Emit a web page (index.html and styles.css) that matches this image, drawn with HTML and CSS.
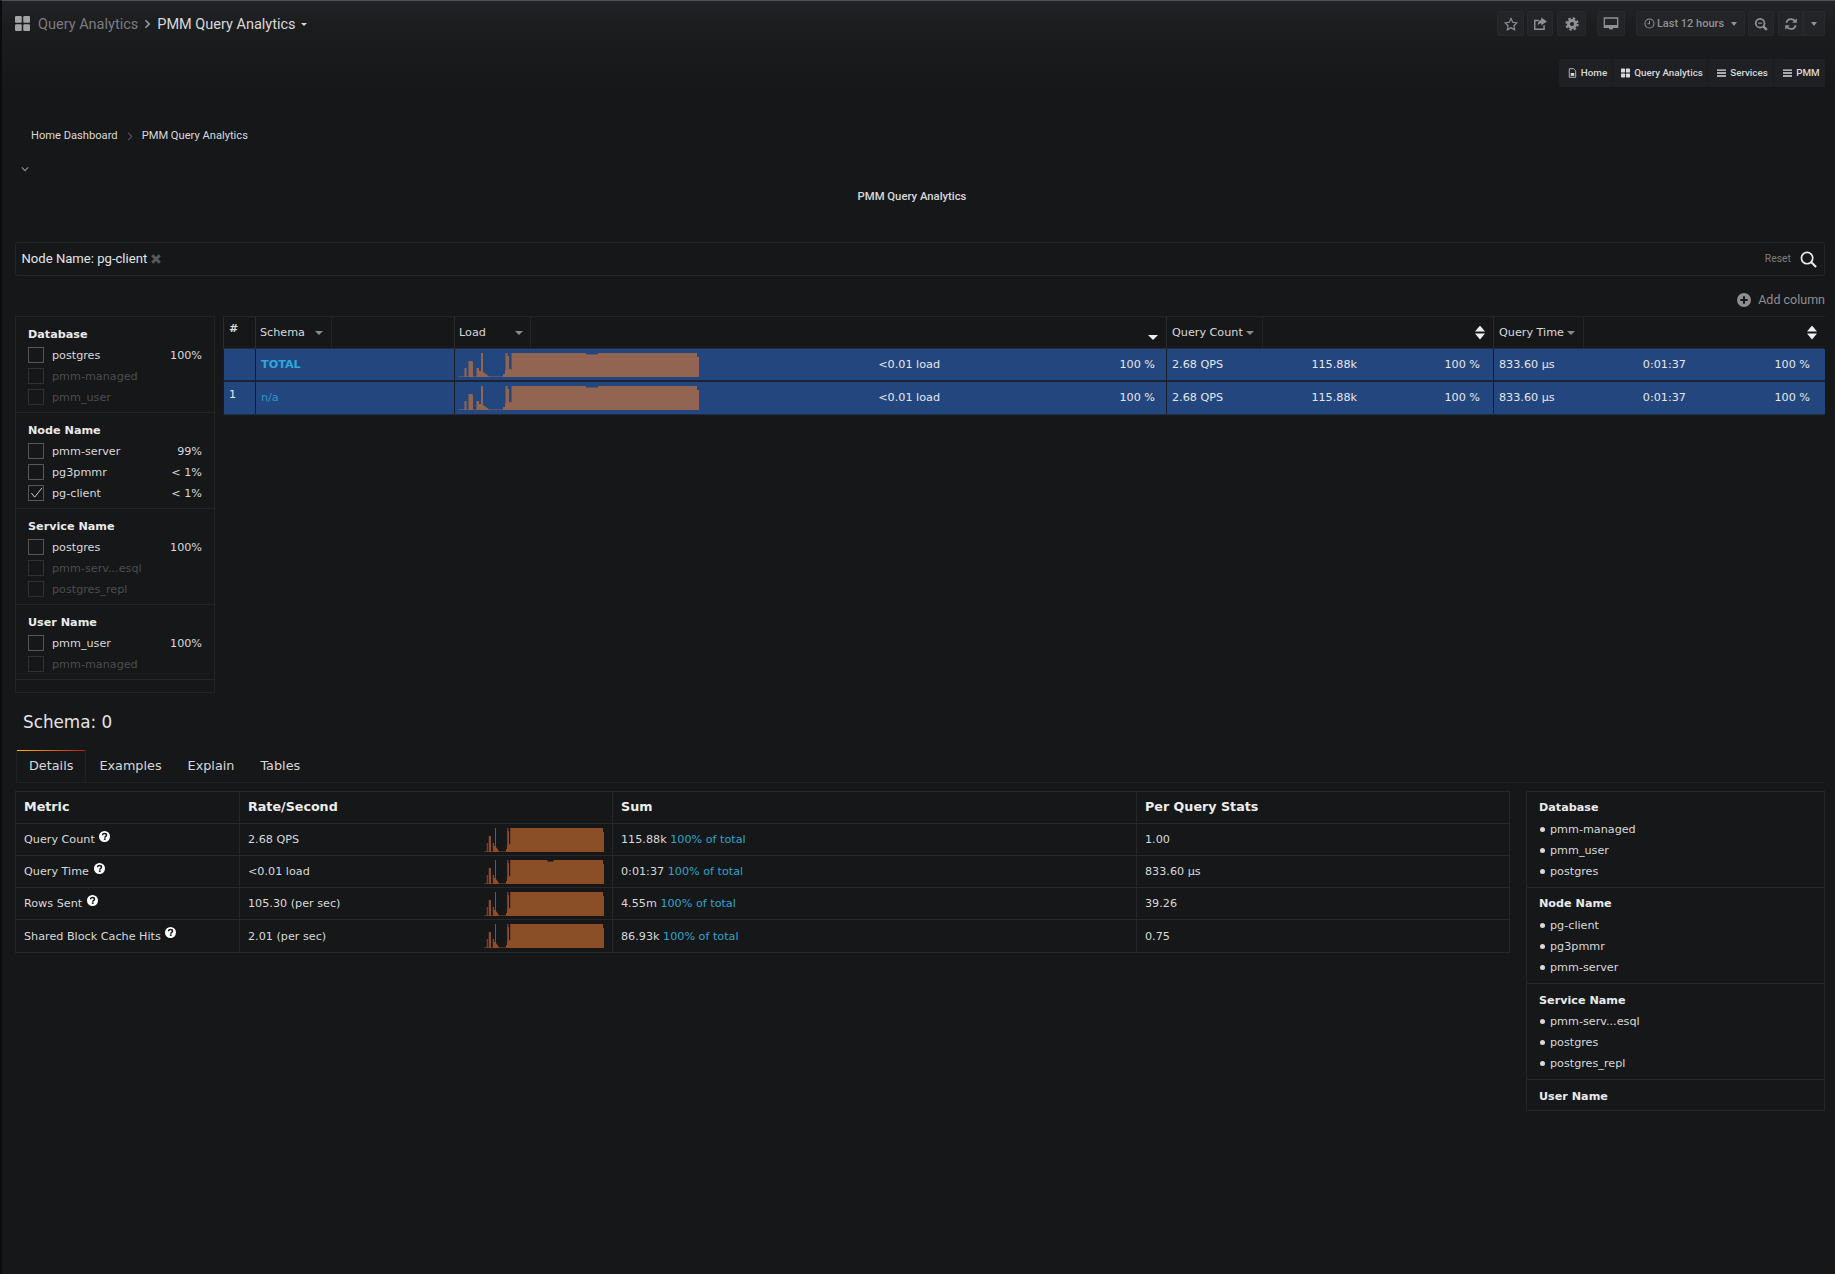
FILE: index.html
```html
<!DOCTYPE html>
<html lang="en">
<head>
<meta charset="utf-8">
<title>PMM Query Analytics</title>
<link rel="stylesheet" href="styles.css">
</head>
<body>
<svg class="defs" width="0" height="0" aria-hidden="true">
  <symbol id="spark" viewBox="0 0 240 24" preserveAspectRatio="none">
    <path d="M0 23.4H5.5V15H7.5V23.4H9.5V8H13.5V9H14V23.4H17.5V15H20V18H22V0H24V19L27 21L29 22.5L30 23.4H44V21H46V17.500H46.500V0H48.500V3H50V16H52V17H52.500V0H238V4H240V24H0Z"/>
  </symbol>
  <symbol id="spark-dent" viewBox="0 0 240 24" preserveAspectRatio="none">
    <path d="M0 23.4H5.5V15H7.5V23.4H9.5V8H13.5V9H14V23.4H17.5V15H20V18H22V0H24V19L27 21L29 22.5L30 23.4H44V21H46V17.500H46.500V0H48.500V3H50V16H52V17H52.500V0H127V1.500H139V0H238V4H240V24H0Z"/>
  </symbol>
  <symbol id="grid" viewBox="0 0 16 16">
    <rect x="0" y="0" width="7.200" height="7.200" rx="1.200"/><rect x="8.800" y="0" width="7.200" height="7.200" rx="1.200"/>
    <rect x="0" y="8.800" width="7.200" height="7.200" rx="1.200"/><rect x="8.800" y="8.800" width="7.200" height="7.200" rx="1.200"/>
  </symbol>
  <symbol id="bars" viewBox="1 1 10 10">
    <path d="M1 2h10v1.500H1zM1 5.300h10v1.500H1zM1 8.600h10v1.500H1z"/>
  </symbol>
  <symbol id="help" viewBox="0 0 12 12">
    <circle cx="6" cy="6" r="6" fill="#fff"/>
    <path d="M3.900 4.700C3.900 3.300 5 2.700 6 2.700C7.200 2.700 8.200 3.400 8.200 4.500C8.200 5.900 6.300 5.900 6.300 7.300" fill="none" stroke="#161719" stroke-width="1.600"/>
    <rect x="5.300" y="8" width="2" height="1.700" fill="#161719"/>
  </symbol>
</svg>

<div class="page">
  <header class="navbar">
    <div class="nav-title">
      <svg class="nav-logo"><use href="#grid"/></svg>
      <span class="nav-folder">Query Analytics</span>
      <svg class="nav-sep" viewBox="0 0 8 12"><path d="M1.500 1.500L6 6L1.500 10.500" fill="none" stroke="currentColor" stroke-width="2"/></svg>
      <span class="nav-dash">PMM Query Analytics</span>
      <span class="nav-caret"></span>
    </div>
    <div class="nav-actions">
      <div class="nav-btn w-star"><svg viewBox="0 0 24 24" class="ico"><path d="M12 2.500L15 9L22 10L17 15L18.200 22L12 18.500L5.800 22L7 15L2 10L9 9Z" fill="none" stroke="currentColor" stroke-width="2"/></svg></div>
      <div class="nav-btn w-share"><svg viewBox="0 0 24 24" class="ico"><path d="M19 14V21H3V6H10" fill="none" stroke="currentColor" stroke-width="2.500"/><path d="M14 1L24 7.500L14 14V10.500C11 10.500 9 12 8 15C8 9 10 5.500 14 5Z" fill="currentColor"/></svg></div>
      <div class="nav-btn w-gear"><svg viewBox="0 0 24 24" class="ico"><circle cx="12" cy="12" r="9.500" fill="none" stroke="currentColor" stroke-width="4" stroke-dasharray="4.200 3.260"/><circle cx="12" cy="12" r="6" fill="none" stroke="currentColor" stroke-width="5"/></svg></div>
      <div class="nav-btn w-tv gap-left"><svg viewBox="0 0 24 24" class="ico ico-lg"><path d="M2 3H22V17H2Z" fill="none" stroke="currentColor" stroke-width="2"/><rect x="2" y="13.500" width="20" height="3.500" fill="currentColor"/><path d="M9 17H15V20H9Z" fill="currentColor"/></svg></div>
      <div class="nav-btn w-time gap-left">
        <svg viewBox="0 0 24 24" class="ico ico-clock"><circle cx="12" cy="12" r="10" fill="none" stroke="currentColor" stroke-width="2.200"/><path d="M12 6V12.500H8" fill="none" stroke="currentColor" stroke-width="2.200"/></svg>
        <span>Last 12 hours</span><span class="caret-sm"></span>
      </div>
      <div class="nav-btn w-zoom"><svg viewBox="0 0 24 24" class="ico"><circle cx="10.500" cy="10.500" r="7.500" fill="none" stroke="currentColor" stroke-width="3"/><path d="M16 16L22 22" stroke="currentColor" stroke-width="4"/><path d="M7 10.500H14" stroke="currentColor" stroke-width="2"/></svg></div>
      <div class="nav-btn w-refresh"><svg viewBox="0 0 24 24" class="ico"><path d="M4 10C5 6 8 3.500 12 3.500C15 3.500 17.500 5 19 7" fill="none" stroke="currentColor" stroke-width="3"/><path d="M22 2V10H14Z" fill="currentColor"/><path d="M20 14C19 18 16 20.500 12 20.500C9 20.500 6.500 19 5 17" fill="none" stroke="currentColor" stroke-width="3"/><path d="M2 22V14H10Z" fill="currentColor"/></svg></div>
      <div class="nav-btn w-drop"><span class="caret-sm"></span></div>
    </div>
  </header>

  <nav class="submenu">
    <a class="sub-link w-home"><svg viewBox="0 0 12 14" class="sub-ico"><path d="M1.500 1H7.500L10.500 4V13H1.500Z" fill="none" stroke="currentColor" stroke-width="1.100"/><path d="M3.500 7H8.500V11H3.500Z" fill="currentColor"/></svg>Home</a>
    <a class="sub-link w-qan"><svg class="sub-ico sub-fill"><use href="#grid"/></svg>Query Analytics</a>
    <a class="sub-link w-svc"><svg class="sub-ico sub-fill"><use href="#bars"/></svg>Services</a>
    <a class="sub-link w-pmm"><svg class="sub-ico sub-fill"><use href="#bars"/></svg>PMM</a>
  </nav>

  <div class="crumbs">
    <span>Home Dashboard</span>
    <svg class="crumb-sep" viewBox="0 0 6 10"><path d="M1 1L5 5L1 9" fill="none" stroke="currentColor" stroke-width="1.200"/></svg>
    <span>PMM Query Analytics</span>
  </div>

  <svg class="collapse" viewBox="0 0 10 6"><path d="M1 1L5 5L9 1" fill="none" stroke="currentColor" stroke-width="1.600"/></svg>

  <div class="panel-title">PMM Query Analytics</div>

  <div class="search">
    <div class="chip">Node Name: pg-client
      <svg viewBox="0 0 10 10" class="chip-x"><path d="M1.200 1.200L8.800 8.800M8.800 1.200L1.200 8.800" stroke="currentColor" stroke-width="3"/></svg>
    </div>
    <span class="reset">Reset</span>
    <svg viewBox="0 0 18 18" class="search-ico"><circle cx="7.500" cy="7.500" r="6" fill="none" stroke="currentColor" stroke-width="1.800"/><path d="M12 12L17 17" stroke="currentColor" stroke-width="2.200"/></svg>
  </div>

  <div class="add-col">
    <svg viewBox="0 0 14 14" class="add-ico"><circle cx="7" cy="7" r="7" fill="currentColor"/><path d="M7 3.300V10.700M3.300 7H10.700" stroke="#161719" stroke-width="2"/></svg>
    <span>Add column</span>
  </div>

  <section class="overview">
    <aside class="filters">
      <div class="f-group">
        <h4 class="f-head">Database</h4>
        <div class="f-row"><span class="box"></span><span class="f-name">postgres</span><span class="f-val">100%</span></div>
        <div class="f-row off"><span class="box"></span><span class="f-name">pmm-managed</span></div>
        <div class="f-row off"><span class="box"></span><span class="f-name">pmm_user</span></div>
      </div>
      <div class="f-group">
        <h4 class="f-head">Node Name</h4>
        <div class="f-row"><span class="box"></span><span class="f-name">pmm-server</span><span class="f-val">99%</span></div>
        <div class="f-row"><span class="box"></span><span class="f-name">pg3pmmr</span><span class="f-val">&lt; 1%</span></div>
        <div class="f-row"><span class="box"><svg viewBox="0 0 14 14" class="tick"><path d="M1.500 7.500L5 12L13 2" fill="none" stroke="currentColor"/></svg></span><span class="f-name">pg-client</span><span class="f-val">&lt; 1%</span></div>
      </div>
      <div class="f-group">
        <h4 class="f-head">Service Name</h4>
        <div class="f-row"><span class="box"></span><span class="f-name">postgres</span><span class="f-val">100%</span></div>
        <div class="f-row off"><span class="box"></span><span class="f-name">pmm-serv...esql</span></div>
        <div class="f-row off"><span class="box"></span><span class="f-name">postgres_repl</span></div>
      </div>
      <div class="f-group">
        <h4 class="f-head">User Name</h4>
        <div class="f-row"><span class="box"></span><span class="f-name">pmm_user</span><span class="f-val">100%</span></div>
        <div class="f-row off"><span class="box"></span><span class="f-name">pmm-managed</span></div>
      </div>
    </aside>

    <div class="qtable">
      <div class="q-row q-head">
        <div class="q-cell h-num">#</div>
        <div class="q-cell h-split"><div class="h-sel h-schema">Schema<span class="caret-h"></span></div></div>
        <div class="q-cell h-split"><div class="h-sel h-load">Load<span class="caret-h"></span></div><div class="h-sort"><span class="tri-down"></span></div></div>
        <div class="q-cell h-split"><div class="h-sel h-count">Query Count<span class="caret-h caret-tight"></span></div><div class="h-sort"><span class="tri-both"></span></div></div>
        <div class="q-cell h-split"><div class="h-sel h-time">Query Time<span class="caret-h caret-tight"></span></div><div class="h-sort h-sort-last"><span class="tri-both"></span></div></div>
      </div>
      <div class="q-row q-data">
        <div class="q-cell"></div>
        <div class="q-cell q-name q-total">TOTAL</div>
        <div class="q-cell m-load"><svg class="spark"><use href="#spark-dent"/></svg><span>&lt;0.01 load</span><span class="pct">100 %</span></div>
        <div class="q-cell m-count"><span>2.68 QPS</span><span class="mid">115.88k</span><span class="pct">100 %</span></div>
        <div class="q-cell m-time"><span>833.60 µs</span><span class="mid">0:01:37</span><span class="pct">100 %</span></div>
      </div>
      <div class="q-row q-data">
        <div class="q-cell q-idx">1</div>
        <div class="q-cell q-name">n/a</div>
        <div class="q-cell m-load"><svg class="spark"><use href="#spark-dent"/></svg><span>&lt;0.01 load</span><span class="pct">100 %</span></div>
        <div class="q-cell m-count"><span>2.68 QPS</span><span class="mid">115.88k</span><span class="pct">100 %</span></div>
        <div class="q-cell m-time"><span>833.60 µs</span><span class="mid">0:01:37</span><span class="pct">100 %</span></div>
      </div>
    </div>
  </section>

  <h2 class="schema">Schema: 0</h2>

  <div class="tabs">
    <div class="tab active">Details</div>
    <div class="tab">Examples</div>
    <div class="tab">Explain</div>
    <div class="tab">Tables</div>
  </div>

  <section class="details">
    <div class="metrics">
      <div class="d-row d-head">
        <div class="d-cell">Metric</div><div class="d-cell">Rate/Second</div><div class="d-cell">Sum</div><div class="d-cell">Per Query Stats</div>
      </div>
      <div class="d-row">
        <div class="d-cell">Query Count <svg class="help"><use href="#help"/></svg></div>
        <div class="d-cell d-rate"><span>2.68 QPS</span><svg class="spark-d"><use href="#spark"/></svg></div>
        <div class="d-cell">115.88k <span class="share">100% of total</span></div>
        <div class="d-cell">1.00</div>
      </div>
      <div class="d-row">
        <div class="d-cell">Query Time <svg class="help"><use href="#help"/></svg></div>
        <div class="d-cell d-rate"><span>&lt;0.01 load</span><svg class="spark-d"><use href="#spark-dent"/></svg></div>
        <div class="d-cell">0:01:37 <span class="share">100% of total</span></div>
        <div class="d-cell">833.60 µs</div>
      </div>
      <div class="d-row">
        <div class="d-cell">Rows Sent <svg class="help"><use href="#help"/></svg></div>
        <div class="d-cell d-rate"><span>105.30 (per sec)</span><svg class="spark-d"><use href="#spark"/></svg></div>
        <div class="d-cell">4.55m <span class="share">100% of total</span></div>
        <div class="d-cell">39.26</div>
      </div>
      <div class="d-row">
        <div class="d-cell">Shared Block Cache Hits <svg class="help"><use href="#help"/></svg></div>
        <div class="d-cell d-rate"><span>2.01 (per sec)</span><svg class="spark-d"><use href="#spark"/></svg></div>
        <div class="d-cell">86.93k <span class="share">100% of total</span></div>
        <div class="d-cell">0.75</div>
      </div>
    </div>

    <aside class="labels">
      <div class="l-group">
        <h4 class="l-head">Database</h4>
        <ul class="l-list"><li>pmm-managed</li><li>pmm_user</li><li>postgres</li></ul>
      </div>
      <div class="l-group">
        <h4 class="l-head">Node Name</h4>
        <ul class="l-list"><li>pg-client</li><li>pg3pmmr</li><li>pmm-server</li></ul>
      </div>
      <div class="l-group l-wide">
        <h4 class="l-head">Service Name</h4>
        <ul class="l-list"><li>pmm-serv...esql</li><li>postgres</li><li>postgres_repl</li></ul>
      </div>
      <div class="l-group l-last">
        <h4 class="l-head">User Name</h4>
      </div>
    </aside>
  </section>
</div>
</body>
</html>
```

FILE: styles.css
```css
* { box-sizing: border-box; }
html, body { margin: 0; height: 100%; }
body {
  background: linear-gradient(to bottom, #232427 0, #1c1d1f 24px, #161719 90px);
  background-repeat: no-repeat;
  background-color: #161719;
  border-top: 1px solid #4f4f51;
  border-left: 2px solid #0b0c0d;
  color: #d8d9da;
  font: 11.200px/14px "DejaVu Sans", sans-serif;
  overflow: hidden;
}
.defs { position: absolute; }
.page { padding: 0 10px 0 13px; }

/* navbar */
.navbar { display: flex; justify-content: space-between; height: 58px; padding-top: 10px; }
.nav-title { display: flex; align-items: center; height: 25px; font: 14.500px/25px Roboto, sans-serif; }
.nav-logo { width: 15px; height: 15px; fill: #a3a4a6; margin-right: 8px; }
.nav-folder { color: #7b7b7e; padding-top: 1px; }
.nav-sep { width: 7px; height: 10px; color: #9a9a9c; margin: 1px 6px 0; }
.nav-dash { color: #d8d9da; padding-top: 1px; }
.nav-caret { border: 3px solid transparent; border-top: 3px solid #d8d9da; margin: 5px 0 0 5px; }
.nav-actions { display: flex; gap: 3px; }
.nav-btn { height: 25px; display: flex; align-items: center; justify-content: center; background: #232427; border: 1px solid #29292c; color: #8f9092; border-radius: 2px; font: 500 11px/23px Roboto, sans-serif; }
.ico { width: 14px; height: 14px; }
.ico-lg { width: 16px; height: 16px; }
.ico-clock { width: 11px; height: 11px; margin-right: 2px; }
.gap-left { margin-left: 8px; }
.w-star { width: 27px; } .w-share { width: 26px; } .w-gear { width: 29px; margin-left: 1px; }
.w-tv { width: 28px; } .w-time { width: 109px; } .w-zoom { width: 26px; }
.w-refresh { width: 25px; margin-left: 1px; border-radius: 2px 0 0 2px; }
.w-drop { width: 22px; margin-left: -3px; border-radius: 0 2px 2px 0; }
.caret-sm { border: 3.500px solid transparent; border-top: 4px solid #8f9092; margin: 4px 0 0 7px; }
.w-drop .caret-sm { margin-left: 0; }

/* submenu */
.submenu { display: flex; justify-content: flex-end; height: 28px; }
.sub-link { display: flex; align-items: center; justify-content: center; padding-left: 4px; background: #1f2023; color: #d8d9da; font: 500 9.800px/28px Roboto, sans-serif; border-right: 1px solid #1a1b1d; }
.sub-ico { width: 9px; height: 10px; margin-right: 4px; }
.sub-fill { fill: #d8d9da; }
.w-home { width: 54px; border-radius: 2px 0 0 2px; }
.w-qan { width: 95px; } .w-svc { width: 66px; } .w-pmm { width: 51px; border-right: 0; }

/* breadcrumbs, title */
.crumbs { display: flex; align-items: center; height: 16px; margin: 41px 0 0 16px; font: 11.150px/16px Roboto, sans-serif; }
.crumb-sep { width: 6px; height: 9px; margin: 0 9px; color: #55565a; }
.collapse { display: block; width: 8px; height: 6px; color: #8a8b8d; margin: 22px 0 0 6px; }
.panel-title { height: 16px; margin-top: 17px; padding-right: 16px; text-align: center; font: 500 11.300px/16px Roboto, sans-serif; }

/* search */
.search { display: flex; align-items: center; height: 34px; margin-top: 37px; padding: 0 7px 0 5.500px; border: 1px solid #242528; border-radius: 3px; }
.chip { flex: 1; display: flex; align-items: center; font: 13.100px/32px Roboto, sans-serif; color: #e4e5e6; }
.chip-x { width: 10px; height: 10px; margin-left: 4px; color: #56575a; }
.reset { font: 10.400px/14px Roboto, sans-serif; color: #7b7c7e; margin-right: 9px; }
.search-ico { width: 17px; height: 17px; color: #e8e9ea; }

.add-col { display: flex; justify-content: flex-end; align-items: center; gap: 7px; height: 16px; margin-top: 16px; color: #8f8f91; font: 12.500px/16px Roboto, sans-serif; }
.add-ico { width: 14px; height: 14px; }

/* overview */
.overview { display: flex; align-items: flex-start; gap: 8px; margin-top: 8px; }
.filters { width: 200px; height: 377px; flex: none; border: 1px solid #232427; }
.f-group { padding: 11px 0 4px 12px; border-bottom: 1px solid #232427; }
.f-head { margin: 0 0 3px; font: bold 11.200px/14px "DejaVu Sans", sans-serif; color: #e9eaeb; }
.f-row { display: flex; align-items: center; height: 21px; padding-right: 12px; }
.f-row.off { color: #4b4c4f; }
.box { width: 16px; height: 16px; flex: none; display: flex; align-items: center; justify-content: center; border: 1px solid #56575a; margin: -2px 8px 0 0; color: #d8d9da; }
.off .box { border-color: #2f3033; }
.tick { width: 13px; height: 13px; }
.f-name { flex: 1; }

/* query table */
.qtable { flex: 1; border-top: 1px solid #232427; }
.q-row { display: grid; grid-template-columns: 32px 199px 712px 327px 331px; }
.q-head { height: 32px; }
.q-cell { border-left: 1px solid #232427; min-width: 0; }
.q-head .q-cell { border-left-color: #2a2b2e; border-bottom: 1px solid #2a2b2e; }
.h-num { padding: 5px 5px; font-weight: bold; }
.h-split { display: flex; }
.h-sel { display: flex; align-items: center; justify-content: space-between; padding: 0 7px 0 4px; border-right: 1px solid #232427; height: 100%; }
.h-schema { width: 76px; padding-right: 8px; } .h-load { width: 76px; } .h-count { width: 96px; padding-left: 5px; padding-right: 8px; } .h-time { width: 90px; padding-left: 5px; padding-right: 8px; }
.caret-h { border: 4px solid transparent; border-top: 4px solid #8a8b8d; margin-top: 4px; }
.caret-tight { margin-left: 3px; }
.h-sort { flex: 1; display: flex; justify-content: flex-end; align-items: center; padding-right: 8px; }
.h-sort-last { padding-right: 7px; }
.tri-down { border: 5px solid transparent; border-top: 5px solid #eee; margin-top: 14px; }
.tri-both { width: 10px; height: 14px; background: #eee; clip-path: polygon(50% 0, 100% 42%, 0 42%, 0 58%, 100% 58%, 50% 100%, 0 58%, 0 42%); }
.q-data { height: 33px; background: #23467f; border-bottom: 2px solid #1c2433; color: #e6e7e8; }
.q-data + .q-data { height: 33px; border-bottom: 1px solid #1f2c42; }
.q-data .q-cell { border-left-color: #151a24; line-height: 32px; }
.q-data .q-idx { padding: 6px 5px 0; line-height: 14px; }
.q-name { padding: 0 5px; color: #2d95c8; }
.q-data .q-total { font-weight: bold; color: #2ca8dc; line-height: 31px; }
.m-load { display: grid; grid-template-columns: 244px 1fr 215px; align-items: center; padding-right: 11px; }
.m-load span:nth-child(2) { text-align: right; }
.spark { width: 240px; height: 24px; margin-left: 4px; fill: #916551; }
.pct { text-align: right; }
.m-count, .m-time { display: grid; padding: 0 13px 0 5px; }
.m-count { grid-template-columns: 1fr auto 123px; }
.m-time { grid-template-columns: 1fr auto 124px; padding-right: 14px; }

/* bottom */
.schema { height: 20px; margin: 19px 0 0 8px; font: 400 16.800px/20px "DejaVu Sans", sans-serif; color: #e4e5e6; }
.tabs { display: flex; height: 33px; margin-top: 18px; padding-left: 1px; border-bottom: 1px solid #202124; font-size: 12.800px; }
.tab { padding: 0 13px; line-height: 31px; color: #d8d9da; }
.tab.active { padding: 0 12px; border-left: 1px solid #202124; border-right: 1px solid #202124; background: linear-gradient(90deg, #ffb400, #e3661c 50%, #b3201a) top left / 100% 1px no-repeat; }
.details { display: flex; align-items: flex-start; gap: 16px; margin-top: 8px; }
.metrics { width: 1495px; flex: none; border: 1px solid #26272a; border-bottom: 0; }
.d-row { display: grid; grid-template-columns: 223px 373px 524px 1fr; height: 32px; border-bottom: 1px solid #26272a; }
.d-row:last-child { height: 33px; }
.d-cell { display: flex; align-items: center; padding: 1px 8px 0; border-left: 1px solid #26272a; white-space: pre-wrap; }
.d-cell:first-child { border-left: 0; }
.d-head .d-cell { font: bold 12.700px/14px "DejaVu Sans", sans-serif; color: #eceded; padding: 0 8px 2px; }
.d-rate { justify-content: space-between; }
.spark-d { width: 120px; height: 24px; fill: #8a4f26; margin-top: -1px; }
.help { width: 11px; height: 11px; margin: -8px 0 0 1px; }
.share { color: #2fa4c8; }
.labels { flex: 1; border: 1px solid #26272a; }
.l-group { height: 96px; padding: 9px 12px 0; border-bottom: 1px solid #26272a; }
.l-wide { padding-top: 10px; }
.l-wide .l-list { padding-top: 3px; }
.l-last { height: 30px; border-bottom: 0; padding-top: 10px; }
.l-head { margin: 0; font: bold 11.200px/14px "DejaVu Sans", sans-serif; color: #e9eaeb; }
.l-list { list-style: none; margin: 0; padding: 4px 0 0; }
.l-list li { display: flex; align-items: center; gap: 5px; height: 21px; }
.l-list li::before { content: ""; width: 5px; height: 5px; margin-left: 1px; border-radius: 50%; background: #d8d9da; }
```
